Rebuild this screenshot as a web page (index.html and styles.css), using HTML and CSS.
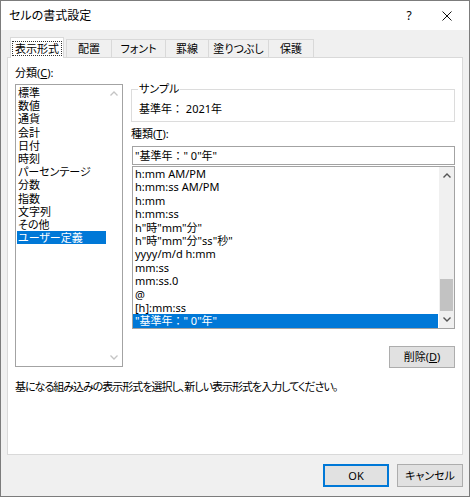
FILE: index.html
```html
<!DOCTYPE html>
<html lang="ja">
<head>
<meta charset="utf-8">
<title>セルの書式設定</title>
<link rel="stylesheet" href="styles.css">
</head>
<body>
<div class="window">
  <div class="titlebar">
    <span class="title">セルの書式設定</span>
    <span class="tb-btn help">?</span>
    <span class="tb-btn close"><svg width="10" height="10" viewBox="0 0 10 10"><path d="M0.5 0.5 L9.5 9.5 M9.5 0.5 L0.5 9.5" stroke="#111" stroke-width="1" fill="none"/></svg></span>
  </div>
  <div class="body">
    <div class="tabs">
      <div class="tab active"><span class="focus">表示形式</span></div>
      <div class="tab first t-haichi">配置</div>
      <div class="tab t-font">フォント</div>
      <div class="tab t-keisen">罫線</div>
      <div class="tab t-nuri">塗りつぶし</div>
      <div class="tab t-hogo">保護</div>
    </div>
    <div class="panel">
      <div class="content">
        <div class="left">
          <div class="label">分類(<u>C</u>):</div>
          <div class="listbox cat">
            <ul class="items">
              <li>標準</li>
              <li>数値</li>
              <li>通貨</li>
              <li>会計</li>
              <li>日付</li>
              <li>時刻</li>
              <li>パーセンテージ</li>
              <li>分数</li>
              <li>指数</li>
              <li>文字列</li>
              <li>その他</li>
              <li class="sel">ユーザー定義</li>
            </ul>
            <div class="vscroll disabled">
              <span class="arrow"><svg width="8" height="5" viewBox="0 0 8 5"><polyline points="0.5,4.5 4,1 7.5,4.5" fill="none" stroke="currentColor" stroke-width="1.3"/></svg></span>
              <span class="track"></span>
              <span class="arrow"><svg width="8" height="5" viewBox="0 0 8 5"><polyline points="0.5,0.5 4,4 7.5,0.5" fill="none" stroke="currentColor" stroke-width="1.3"/></svg></span>
            </div>
          </div>
        </div>
        <div class="right">
          <fieldset class="sample">
            <legend>サンプル</legend>
            <div class="sample-text">基準年： 2021年</div>
          </fieldset>
          <div class="label type-label">種類(<u>T</u>):</div>
          <div class="input">"基準年：" 0"年"</div>
          <div class="listbox fmt">
            <ul class="items">
              <li>h:mm AM/PM</li>
              <li>h:mm:ss AM/PM</li>
              <li>h:mm</li>
              <li>h:mm:ss</li>
              <li>h"時"mm"分"</li>
              <li>h"時"mm"分"ss"秒"</li>
              <li>yyyy/m/d h:mm</li>
              <li>mm:ss</li>
              <li>mm:ss.0</li>
              <li>@</li>
              <li>[h]:mm:ss</li>
              <li class="sel nopalt">"基準年：" 0"年"</li>
            </ul>
            <div class="vscroll active">
              <span class="arrow"><svg width="8" height="5" viewBox="0 0 8 5"><polyline points="0.5,4.5 4,1 7.5,4.5" fill="none" stroke="currentColor" stroke-width="1.4"/></svg></span>
              <span class="track"><span class="thumb"></span></span>
              <span class="arrow"><svg width="8" height="5" viewBox="0 0 8 5"><polyline points="0.5,0.5 4,4 7.5,0.5" fill="none" stroke="currentColor" stroke-width="1.4"/></svg></span>
            </div>
          </div>
          <div class="del-row"><button class="btn">削除(<u>D</u>)</button></div>
        </div>
      </div>
      <p class="hint">基になる組み込みの表示形式を選択し、新しい表示形式を入力してください。</p>
    </div>
    <div class="footer">
      <button class="btn ok">OK</button>
      <button class="btn">キャンセル</button>
    </div>
  </div>
</div>
</body>
</html>
```

FILE: styles.css
```css
* { box-sizing: border-box; }
html, body { margin: 0; padding: 0; background: #fff; }
body {
  font-family: "Noto Sans", "Noto Sans CJK JP", sans-serif;
  font-size: 11px;
  color: #000;
  font-feature-settings: "palt";
}
u { text-decoration: underline; text-underline-offset: 1px; }

.window {
  width: 470px;
  height: 497px;
  border: 1px solid #7c7c7c;
  background: #f0f0f0;
  display: flex;
  flex-direction: column;
}

.titlebar {
  flex: none;
  height: 29px;
  background: #fff;
  display: flex;
  align-items: center;
}
.title { flex: 1; padding-left: 8px; font-size: 12px; line-height: 14px; }
.tb-btn { height: 29px; display: flex; align-items: center; justify-content: center; }
.help { width: 32px; font-size: 12px; }
.close { width: 44px; }

.body { flex: 1; display: flex; flex-direction: column; padding-top: 7px; }

.tabs {
  flex: none;
  height: 20px;
  display: flex;
  align-items: flex-end;
  padding-left: 9px;
  position: relative;
  z-index: 1;
}
.tab {
  height: 18px;
  display: flex;
  align-items: center;
  justify-content: center;
  border-top: 1px solid #d9d9d9;
  border-right: 1px solid #d9d9d9;
  background: #f0f0f0;
  line-height: 14px;
}
.tab.first { border-left: 1px solid #d9d9d9; margin-left: 2px; }
.tab.active {
  width: 54px;
  height: 21px;
  margin-bottom: -1px;
  background: #fff;
  border: 1px solid #d9d9d9;
  border-bottom: none;
}
.focus {
  display: block;
  width: 50px;
  height: 15px;
  margin-top: 1px;
  border: 1px dotted #333;
  text-align: center;
  line-height: 13px;
}
.t-haichi { width: 46px; }
.t-font { width: 54px; }
.t-keisen { width: 43px; }
.t-nuri { width: 60px; }
.t-hogo { width: 45px; }

.panel {
  flex: none;
  height: 398px;
  margin: 0 6px;
  background: #fff;
  border: 1px solid #d9d9d9;
  padding: 8px 7px 0 7px;
}
.content { display: flex; gap: 8px; }
.left { width: 108px; flex: none; }
.right { width: 324px; flex: none; }

.label { line-height: 14px; height: 14px; }

.listbox {
  display: flex;
  background: #fff;
  border: 1px solid #a3a3a3;
}
.items {
  flex: 1;
  margin: 0;
  padding: 0;
  list-style: none;
  min-width: 0;
}
.items li { white-space: nowrap; }
.items li.sel { background: #0078d7; color: #fff; }

.cat { margin-top: 4px; height: 283px; }
.cat .items { padding: 1px 0 0 1px; }
.cat li { line-height: 13.2px; height: 13.2px; padding-left: 1px; }

.fmt { margin: 1px 0 0 1px; height: 163px; }
.fmt li { line-height: 13.42px; height: 13.42px; padding-left: 2px; }

.nopalt, .sample-text, .input { font-feature-settings: normal; }

.vscroll { width: 16px; flex: none; display: flex; flex-direction: column; }
.vscroll .arrow { height: 17px; flex: none; display: flex; align-items: center; justify-content: center; }
.vscroll .track { flex: 1; display: block; }
.vscroll.disabled { color: #c4c4c4; background: #fff; }
.vscroll.active { width: 15px; margin-left: 1px; background: #f0f0f0; color: #555; }
.thumb { display: block; height: 32px; margin: 95px 1px 0 1px; background: #c2c2c2; }

.sample {
  margin: 16px 0 0 0;
  padding: 6px 8px 5px 7px;
  border: 1px solid #dcdcdc;
  min-width: 0;
}
.sample legend { padding: 0 1px; margin-left: -1px; line-height: 14px; }
.sample-text { line-height: 14px; }

.type-label { margin-top: 5px; }
.input {
  margin: 5px 0 0 1px;
  height: 19px;
  border: 1px solid #a3a3a3;
  line-height: 17px;
  padding-left: 2px;
  white-space: nowrap;
}

.del-row { display: flex; justify-content: flex-end; margin-top: 17px; }

.btn {
  width: 66px;
  height: 22px;
  padding: 0;
  font: inherit;
  color: #000;
  background: #e1e1e1;
  border: 1px solid #adadad;
  line-height: 14px;
}
.ok { height: 23px; border: 1px solid #0078d7; box-shadow: inset 0 0 0 1px #0078d7; }
.footer .btn { height: 23px; }

.hint { margin: 12px 0 0 0; line-height: 14px; white-space: nowrap; letter-spacing: -1px; }

.footer {
  flex: none;
  display: flex;
  justify-content: flex-end;
  gap: 8px;
  padding: 9px 6px 0 0;
}
```
